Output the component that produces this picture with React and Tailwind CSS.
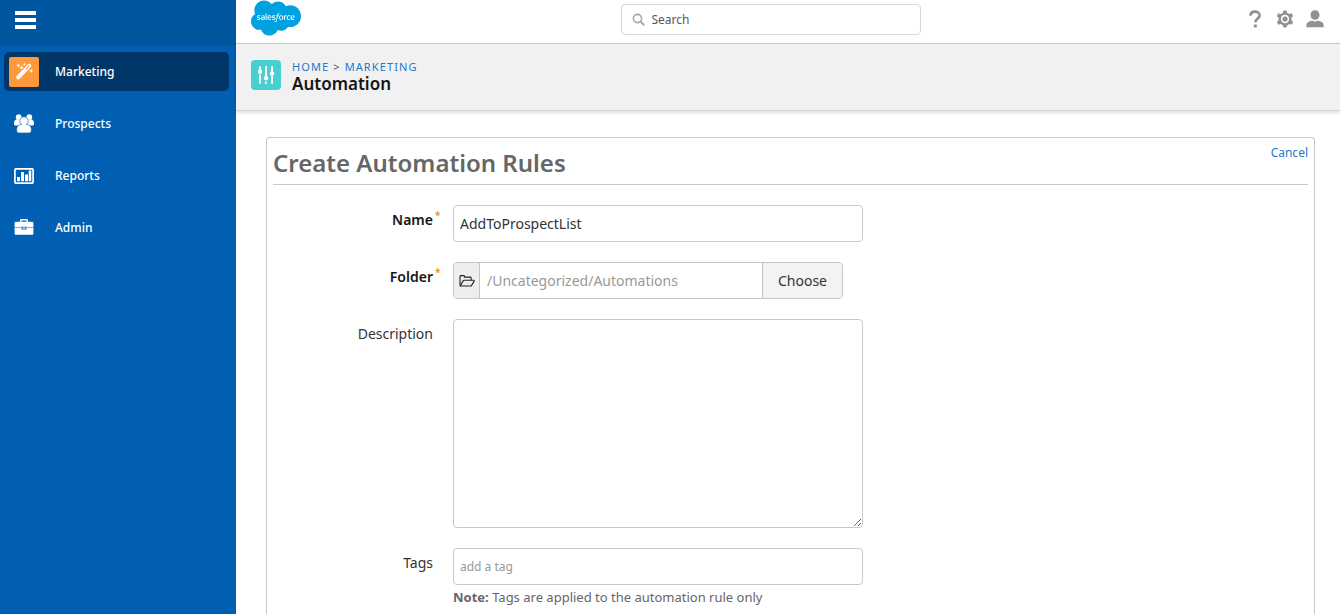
import { FaSalesforce } from "react-icons/fa";

function WandIcon() {
  return (
    <svg viewBox="0 0 20 20" className="size-5" fill="currentColor" aria-hidden="true">
      <path d="M4.200 15.400L15.200 3.800" stroke="currentColor" strokeWidth="4" strokeLinecap="round" />
      <path d="M12.300 6.900L14.900 4.100" className="stroke-[#ff9a3c]" strokeWidth="1.300" strokeLinecap="round" />
      <path d="M4.300 1.200l.6 1.500 1.500.6-1.500.6-.6 1.500-.6-1.500-1.500-.6 1.500-.6zM10.300.4l.5 1.300 1.300.5-1.300.5-.5 1.300-.5-1.300-1.300-.5 1.300-.5zM7.500 3.300l.7 1.600 1.600.7-1.600.7-.7 1.600-.7-1.600-1.600-.7 1.600-.7zM17.200 6.800l.6 1.500 1.500.6-1.500.6-.6 1.500-.6-1.500-1.500-.6 1.500-.6z" />
    </svg>
  );
}

function PeopleIcon() {
  return (
    <svg viewBox="0 0 20 20" className="size-5" fill="currentColor" aria-hidden="true">
      <circle cx="4.700" cy="3.200" r="2.900" />
      <circle cx="15.300" cy="3.200" r="2.900" />
      <path d="M0 9.200C0 7 1.200 5.600 3 5.600h4.200v6H1.500C.5 11.600 0 10.800 0 9.200zM20 9.200c0-2.200-1.200-3.600-3-3.600h-4.200v6h5.700c1 0 1.500-.8 1.500-2.400z" />
      <g className="stroke-[#005fb2]" strokeWidth="0.6">
        <path d="M2.600 16c0-3.600 2-5.600 4.600-5.600h5.600c2.600 0 4.600 2 4.600 5.600 0 2-1 3-2.600 3H5.200c-1.600 0-2.600-1-2.600-3z" />
        <circle cx="10" cy="7" r="4.200" />
      </g>
      <path d="M8 10h4v2H8z" />
    </svg>
  );
}

function ChartIcon() {
  return (
    <svg viewBox="0 0 20 20" className="size-5" fill="currentColor" aria-hidden="true">
      <rect x="0.900" y="2.900" width="18.200" height="14.200" rx="1" fill="none" stroke="currentColor" strokeWidth="1.700" />
      <path d="M3 11h3v4.200H3zM7 6h3v9.200H7zM11 8.500h3v6.700h-3zM14.700 4.500h2.600v10.700h-2.600z" />
    </svg>
  );
}

function BriefcaseIcon() {
  return (
    <svg viewBox="0 0 20 20" className="size-5" fill="currentColor" aria-hidden="true">
      <path
        fillRule="evenodd"
        d="M6 3.700V2.400C6 1.600 6.600 1 7.400 1h5.200c.8 0 1.400.6 1.400 1.400v1.300h4c.8 0 1.400.6 1.400 1.400v4.300h-7V8.800H7.600v.6h-7V5.100c0-.8.6-1.400 1.400-1.400zM7.500 3.700h5V2.400h-5z"
      />
      <path d="M.6 9.900h7v1.600h4.800V9.900h7v5.500c0 .8-.6 1.400-1.400 1.400H2c-.8 0-1.400-.6-1.400-1.400z" />
      <path d="M8.500 9.400h3v1.200h-3z" />
    </svg>
  );
}

function MenuIcon() {
  return (
    <svg viewBox="0 0 21 18" className="h-[18px] w-[21px]" fill="currentColor" aria-hidden="true">
      <rect width="21" height="4" rx="0.500" />
      <rect y="7" width="21" height="4" rx="0.500" />
      <rect y="14" width="21" height="4" rx="0.500" />
    </svg>
  );
}

function SearchIcon() {
  return (
    <svg viewBox="0 0 14 14" className="size-3.5" fill="none" stroke="currentColor" aria-hidden="true">
      <circle cx="5.500" cy="5.500" r="4.100" strokeWidth="1.600" />
      <path d="M8.600 8.600l3.600 3.600" strokeWidth="2" />
    </svg>
  );
}

function HelpIcon() {
  return (
    <svg viewBox="0 0 18 18" className="size-[18px]" fill="none" stroke="currentColor" aria-hidden="true">
      <path d="M4.500 5.800C4.600 3.200 6.300 1.700 9 1.700s4.600 1.500 4.600 3.700c0 3.300-4.300 3.300-4.300 6.800" strokeWidth="2.700" />
      <rect x="7.800" y="14.500" width="3" height="3" fill="currentColor" stroke="none" />
    </svg>
  );
}

function GearIcon() {
  return (
    <svg viewBox="0 0 18 18" className="size-[18px]" aria-hidden="true">
      <g fill="currentColor">
        <circle cx="9" cy="9" r="6.600" />
        <rect x="7.100" y="0.400" width="3.800" height="17.200" rx="1" />
        <rect x="7.100" y="0.400" width="3.800" height="17.200" rx="1" transform="rotate(60 9 9)" />
        <rect x="7.100" y="0.400" width="3.800" height="17.200" rx="1" transform="rotate(120 9 9)" />
      </g>
      <circle cx="9" cy="9" r="4.200" fill="white" />
      <circle cx="9" cy="9" r="2.600" fill="currentColor" />
    </svg>
  );
}

function UserIcon() {
  return (
    <svg viewBox="0 0 18 18" className="size-[18px]" fill="currentColor" aria-hidden="true">
      <ellipse cx="9" cy="5" rx="4.500" ry="4.800" />
      <path d="M.4 17.200v-2.400c0-2.400 2.500-3.400 5.800-4.400.8.700 1.800 1 2.800 1s2-.3 2.800-1c3.300 1 5.800 2 5.800 4.400v2.400z" />
    </svg>
  );
}

function SlidersIcon() {
  return (
    <svg viewBox="0 0 20 20" className="size-5" fill="none" stroke="currentColor" strokeWidth="1.900" strokeLinecap="round" aria-hidden="true">
      <path d="M4 2v3M4 10.500V18M10 2v9M10 17.500V18M16 2v5M16 11.500V18" />
      <g fill="currentColor" stroke="none">
        <circle cx="4" cy="6.800" r="2.200" />
        <circle cx="10" cy="13.300" r="2.200" />
        <circle cx="16" cy="8.600" r="2.200" />
      </g>
    </svg>
  );
}

function FolderOpenIcon() {
  return (
    <svg viewBox="0 0 16 14" className="h-3.5 w-4" fill="none" stroke="currentColor" strokeWidth="1.100" strokeLinejoin="round" aria-hidden="true">
      <path d="M1 11.500V2.500c0-.5.400-.9.900-.9h2.700c.5 0 .8.300.8.800v.7h5.800c.5 0 .9.400.9.900v2.100" />
      <path d="M1.200 11.900l2.900-5c.2-.4.600-.6 1-.6h9.600c.5 0 .7.400.5.800l-2.600 4.300c-.2.400-.6.600-1 .6H1.700c-.4 0-.6 0-.5-.1z" />
    </svg>
  );
}

const navItems = [
  { label: "Marketing", icon: WandIcon, active: true },
  { label: "Prospects", icon: PeopleIcon },
  { label: "Reports", icon: ChartIcon },
  { label: "Admin", icon: BriefcaseIcon },
];

const topActions = [
  { label: "Help", icon: HelpIcon },
  { label: "Settings", icon: GearIcon },
  { label: "Account", icon: UserIcon },
];

function Sidebar() {
  return (
    <aside className="flex w-[236px] shrink-0 flex-col bg-[#005fb2] text-white">
      <div className="flex h-[46px] items-start bg-[#0057a0] px-[15px] pt-[11px]">
        <button type="button" aria-label="Toggle menu">
          <MenuIcon />
        </button>
      </div>
      <nav className="flex flex-col gap-[13px] pt-1.5 pr-[7px] pl-1">
        {navItems.map(({ label, icon: Icon, active }) => (
          <a
            key={label}
            href="#"
            aria-current={active ? "page" : undefined}
            className={`flex h-[39px] items-center gap-4 rounded-[5px] px-[5px] text-xs font-medium ${active ? "bg-[#003768]" : ""}`}
          >
            <span className={`flex size-[30px] items-center justify-center rounded-xs ${active ? "bg-[#ff9a3c]" : ""}`}>
              <Icon />
            </span>
            {label}
          </a>
        ))}
      </nav>
    </aside>
  );
}

function TopBar() {
  return (
    <header className="flex h-11 shrink-0 items-start justify-between border-b border-[#c9c9c9] bg-white pr-2.5 pl-[15px]">
      <a href="#" aria-label="Home" className="flex h-9 items-center text-[#00a1e0]">
        <FaSalesforce className="h-10 w-[50px]" />
      </a>
      <label className="mt-1 flex h-[31px] w-[300px] items-center gap-1.5 rounded border border-[#d9d9d9] px-2.5 text-[#a8a8a8]">
        <SearchIcon />
        <input
          type="search"
          aria-label="Search"
          placeholder="Search"
          className="min-w-0 flex-1 text-xs outline-none placeholder:text-[#54585c]"
        />
      </label>
      <div className="mt-1 flex text-[#919191]">
        {topActions.map(({ label, icon: Icon }) => (
          <button key={label} type="button" aria-label={label} className="flex size-[30px] items-center justify-center">
            <Icon />
          </button>
        ))}
      </div>
    </header>
  );
}

function PageHeader() {
  return (
    <div className="flex h-[67px] shrink-0 items-start gap-[11px] border-b border-[#d4d4d4] bg-[#f1f1f1] px-[15px] pt-4 shadow-[0_2px_3px_rgba(0,0,0,0.12)]">
      <span className="flex size-[30px] items-center justify-center rounded bg-[#48cfd0] text-white">
        <SlidersIcon />
      </span>
      <div>
        <nav aria-label="Breadcrumb" className="flex gap-1 text-[11px] leading-[14px] tracking-widest text-[#2378cc]">
          <a href="#">HOME</a>
          <span className="text-[#555]">&gt;</span>
          <a href="#">MARKETING</a>
        </nav>
        <h1 className="text-[17px] leading-5 font-semibold text-[#151515]">Automation</h1>
      </div>
    </div>
  );
}

function Field({ id, label, required, children }) {
  return (
    <div className="flex items-start gap-5">
      <label
        htmlFor={id}
        className={`relative w-40 shrink-0 pt-[5px] text-right text-sm leading-5 ${required ? "font-semibold text-[#151515]" : "text-[#333]"}`}
      >
        {label}
        {required && <span className="absolute top-0.5 left-full pl-0.5 text-[10px] leading-4 text-[#f28b00]">*</span>}
      </label>
      <div className="max-w-[410px] min-w-0 flex-1">{children}</div>
    </div>
  );
}

export default function App() {
  return (
    <div className="flex h-screen overflow-hidden bg-white font-['Noto_Sans','Open_Sans',sans-serif]">
      <Sidebar />
      <div className="flex min-w-0 flex-1 flex-col">
        <TopBar />
        <PageHeader />
        <main className="flex min-h-0 flex-1 flex-col pt-[26px] pr-[25px] pl-[30px]">
          <section className="min-h-0 flex-1 rounded-t border border-b-0 border-[#c9c9c9] px-1.5">
            <div className="flex h-[47px] items-start justify-between border-b border-[#c9c9c9]">
              <h2 className="pt-2 text-2xl leading-[34px] font-semibold text-[#666]">Create Automation Rules</h2>
              <a href="#" className="pt-[5px] text-xs leading-5 text-[#2378cc]">
                Cancel
              </a>
            </div>
            <form className="flex flex-col gap-5 pt-5">
              <Field id="name" label="Name" required>
                <input
                  id="name"
                  type="text"
                  defaultValue="AddToProspectList"
                  className="block h-[37px] w-full rounded border border-[#c9c9c9] px-1.5 text-sm text-[#333]"
                />
              </Field>
              <Field id="folder" label="Folder" required>
                <div className="flex h-[37px] max-w-[390px] overflow-hidden rounded border border-[#c4c4c4]">
                  <span className="flex w-[26px] items-center justify-center border-r border-[#c4c4c4] bg-[#eee] text-[#222]">
                    <FolderOpenIcon />
                  </span>
                  <input
                    id="folder"
                    type="text"
                    placeholder="/Uncategorized/Automations"
                    className="min-w-0 flex-1 px-[7px] text-sm placeholder:text-[#999]"
                  />
                  <button type="button" className="w-20 border-l border-[#c4c4c4] bg-[#f3f3f3] text-sm text-[#333]">
                    Choose
                  </button>
                </div>
              </Field>
              <Field id="description" label="Description">
                <textarea id="description" className="block h-[209px] w-full rounded border border-[#c9c9c9] px-1.5 text-sm" />
              </Field>
              <Field id="tags" label="Tags">
                <input
                  id="tags"
                  type="text"
                  placeholder="add a tag"
                  className="block h-[37px] w-full rounded border border-[#c9c9c9] px-1.5 text-xs placeholder:text-[#999]"
                />
                <p className="pt-0.5 text-[13px] leading-5 text-[#666]">
                  <b>Note:</b> Tags are applied to the automation rule only
                </p>
              </Field>
            </form>
          </section>
        </main>
      </div>
    </div>
  );
}
